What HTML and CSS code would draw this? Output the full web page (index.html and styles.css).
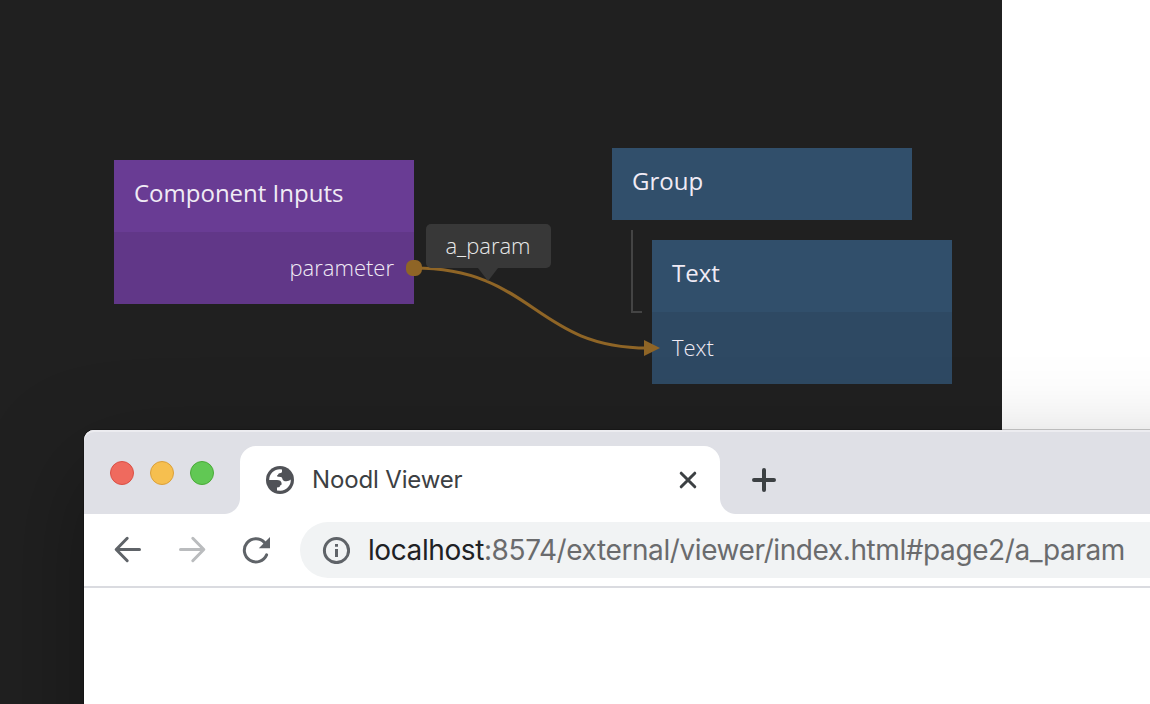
FILE: index.html
```html
<!DOCTYPE html>
<html lang="en">
<head>
<meta charset="utf-8">
<title>Node graph</title>
<link rel="stylesheet" href="styles.css">
</head>
<body>
<main class="desktop">
  <section class="canvas">
    <div class="node node-inputs">
      <div class="node-title">Component Inputs</div>
      <div class="node-port port-out">parameter</div>
    </div>
    <div class="node node-group">
      <div class="node-title">Group</div>
    </div>
    <div class="node node-text">
      <div class="node-title">Text</div>
      <div class="node-port">Text</div>
    </div>
    <div class="tree-line"></div>
    <svg class="wires" width="1002" height="430" viewBox="0 0 1002 430">
      <path class="wire" d="M414 268C534 268 534 348 648 348"/>
      <rect class="wire-end" x="406" y="260" width="16" height="16" rx="6.5"/>
      <path class="wire-end" d="M644 340L660 348L644 356Z"/>
    </svg>
    <div class="tip">a_param</div>
  </section>

  <section class="browser">
    <header class="tabstrip">
      <div class="lights">
        <span class="light red"></span><span class="light yellow"></span><span class="light green"></span>
      </div>
      <div class="tab">
        <svg class="globe" width="28" height="28" viewBox="0 0 28 28">
          <circle cx="14" cy="14" r="14" fill="#505257"/>
          <path fill="#fff" d="M3.2 14A10.8 10.8 0 0 1 14 3.2L16 3.4V5.6C16 7 15 7.2 13.6 7.2C12 7.3 12.6 9.2 11 9.6C11 10.8 12 11 14.5 11C16.6 11 16 13.4 17.4 14.4C19.5 15.8 22.5 15.5 24.8 13.6A10.8 10.8 0 0 1 14.4 24.8L11 24.4V21.4C13.6 21.4 14 20.6 14 19.4C15.6 19.2 15.6 18.5 15.6 17.4C15.6 15.2 13.6 14 11 14Z"/>
        </svg>
        <span class="tab-title">Noodl Viewer</span>
        <svg class="close" width="18" height="18" viewBox="0 0 18 18"><path d="M2.2 2.2L15.8 15.8M15.8 2.2L2.2 15.8"/></svg>
      </div>
      <svg class="plus" width="24" height="24" viewBox="0 0 24 24"><path d="M12 2V22M2 12H22"/></svg>
    </header>
    <div class="toolbar">
      <svg class="nav" width="28" height="28" viewBox="0 0 28 28"><path d="M25.5 13.5H3M13.2 2.3L2.2 13.5L13.2 24.7"/></svg>
      <svg class="nav forward" width="28" height="28" viewBox="0 0 28 28"><path d="M2.5 13.5H25M14.8 2.3L25.8 13.5L14.8 24.7"/></svg>
      <svg class="nav reload" width="28" height="28" viewBox="0 0 28 28"><path d="M24.6 18.9A11.6 11.6 0 1 1 22.4 6.4"/><path class="solid" d="M28 1V12.2H16.8Z"/></svg>
      <div class="address">
        <svg class="info" width="28" height="28" viewBox="0 0 28 28"><circle cx="14.5" cy="14.5" r="12.1"/><path d="M14.5 13V21M14.5 8V10.8"/></svg>
        <span class="url"><span class="host">localhost</span>:8574/external/viewer/index.html#page2/a_param</span>
      </div>
    </div>
    <div class="page"></div>
  </section>
</main>
</body>
</html>
```
FILE: styles.css
```css
* { box-sizing: border-box; }
body { margin: 0; background: #fff; }
.desktop { position: relative; width: 1150px; height: 704px; overflow: hidden; }

.canvas {
  position: relative;
  width: 1002px;
  height: 704px;
  background: #202020;
  font-family: "Open Sans", sans-serif;
}
.node { position: absolute; width: 300px; color: #f0ebf5; }
.node-title { height: 72px; padding-left: 20px; font-size: 24px; line-height: 65px; }
.node-port {
  height: 72px;
  padding: 0 20px;
  font-size: 22px;
  font-weight: 300;
  line-height: 70px;
}
.port-out { text-align: right; }
.node-inputs { left: 114px; top: 160px; background: #693c94; }
.node-inputs .node-port { background: #613788; }
.node-group { left: 612px; top: 148px; background: #314f6b; }
.node-text { left: 652px; top: 240px; background: #314f6b; }
.node-text .node-port { background: #2e4963; }
.tree-line {
  position: absolute;
  left: 631px;
  top: 230px;
  width: 11px;
  height: 83px;
  border: solid #444;
  border-width: 0 0 2px 2px;
}
.wires { position: absolute; left: 0; top: 0; }
.wire { fill: none; stroke: #8f6526; stroke-width: 3; }
.wire-end { fill: #8f6526; }
.tip {
  position: absolute;
  left: 425.5px;
  top: 224px;
  width: 125px;
  height: 44px;
  border-radius: 5px;
  background: #383838;
  color: #e8e8e8;
  font-size: 22px;
  font-weight: 300;
  line-height: 42px;
  text-align: center;
}
.tip::after {
  content: "";
  position: absolute;
  left: 52px;
  top: 44px;
  border: solid transparent;
  border-width: 13px 10px 0;
  border-top-color: #383838;
}

.browser {
  position: absolute;
  left: 84px;
  top: 430px;
  width: 1300px;
  height: 700px;
  border-radius: 10px;
  background: #fff;
  box-shadow: 0 0 0 1px rgba(0, 0, 0, .2), 0 38px 100px rgba(0, 0, 0, .34);
  font-family: Inter, sans-serif;
}
.tabstrip {
  display: flex;
  height: 84px;
  padding-top: 16px;
  border-radius: 10px 10px 0 0;
  background: #dfe0e6;
  box-shadow: inset 0 2px 0 #ececf0;
}
.lights { display: flex; gap: 16px; width: 156px; padding: 15px 0 0 26px; }
.light { width: 24px; height: 24px; border: 1px solid; border-radius: 50%; }
.red { background: #ef6a5e; border-color: #da5045; }
.yellow { background: #f6bf4f; border-color: #dba03a; }
.green { background: #61c854; border-color: #4aab38; }
.tab {
  position: relative;
  display: flex;
  align-items: center;
  width: 480px;
  height: 68px;
  padding: 0 23px 0 26px;
  border-radius: 16px 16px 0 0;
  background: #fff;
}
.tab::before, .tab::after {
  content: "";
  position: absolute;
  bottom: 0;
  width: 16px;
  height: 16px;
}
.tab::before { left: -16px; background: radial-gradient(circle at 0 0, transparent 15.5px, #fff 16.5px); }
.tab::after { right: -16px; background: radial-gradient(circle at 100% 0, transparent 15.5px, #fff 16.5px); }
.tab-title {
  flex: 1;
  padding: 0 0 2px 18px;
  color: #3c4043;
  font-size: 24px;
  letter-spacing: -.15px;
  white-space: nowrap;
}
.close, .plus { fill: none; stroke: #3c4043; stroke-width: 3; stroke-linecap: round; }
.plus { margin: 22px 0 0 32px; stroke-width: 4; }
.toolbar {
  display: flex;
  align-items: center;
  height: 74px;
  border-bottom: 2px solid #dadbe0;
  padding-left: 30px;
}
.nav { margin-right: 36px; fill: none; stroke: #5f6368; stroke-width: 3; stroke-linecap: round; stroke-linejoin: round; }
.forward { stroke: #babcbe; }
.reload { margin-right: 30px; }
.solid { fill: #5f6368; stroke: none; }
.address {
  display: flex;
  flex: 1;
  align-items: center;
  height: 56px;
  padding-left: 22px;
  border-radius: 28px;
  background: #f1f3f4;
}
.info { fill: none; stroke: #5f6368; stroke-width: 3; }
.url {
  padding-left: 18px;
  color: #6a6b6d;
  font-size: 28px;
  letter-spacing: -.41px;
  white-space: nowrap;
}
.host { color: #202124; }
```
